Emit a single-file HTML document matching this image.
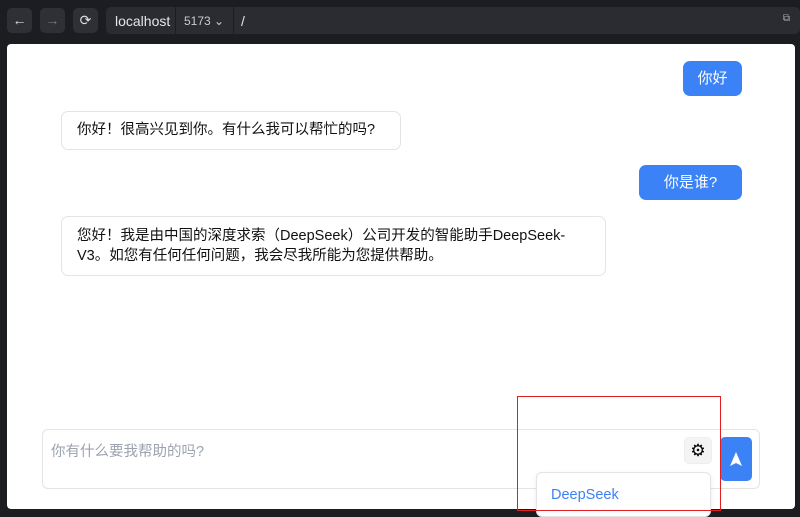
<!DOCTYPE html>
<html><head><meta charset="utf-8"><style>
*{box-sizing:border-box;margin:0;padding:0}
body{width:800px;height:517px;background:#1c1d21;font-family:"Liberation Sans","Noto Sans CJK SC",sans-serif;position:relative;overflow:hidden}
.btn{position:absolute;top:8px;width:25px;height:25px;background:#2e3036;border-radius:5px;color:#ddd;font-size:14px;text-align:center;line-height:25px}
.url{position:absolute;left:106px;top:7px;width:694px;height:27px;background:#2a2c31;border-radius:5px;color:#e6e6e6;font-size:14px}
.page{position:absolute;left:7px;top:44px;width:788px;height:465px;background:#fff;border-radius:4px}
.ub{position:absolute;background:#3b82f6;color:#fff;font-size:15px;border-radius:7px;text-align:center;line-height:35px;height:35px}
.ab{position:absolute;background:#fff;border:1px solid #e4e4e7;border-radius:7px;color:#111;font-size:14.5px;padding:8px 15px;line-height:20px}
</style></head><body>
<div class="btn" style="left:7px">←</div>
<div class="btn" style="left:40px;color:#777">→</div>
<div class="btn" style="left:73px">⟳</div>
<div class="url">
<span style="position:absolute;left:9px;top:6px">localhost</span>
<div style="position:absolute;left:69px;top:0;width:59px;height:27px;border-left:1px solid #1c1d21;border-right:1px solid #1c1d21"></div>
<span style="position:absolute;left:78px;top:7px;font-size:12px;color:#ccc">5173 ⌄</span>
<span style="position:absolute;left:135px;top:6px">/</span>
<span style="position:absolute;right:10px;top:6px;font-size:10px;color:#aaa">⧉</span>
</div>
<div class="page"></div>
<div class="ub" style="left:683px;top:61px;width:59px">你好</div>
<div class="ab" style="left:61px;top:111px;width:340px;height:39px">你好！很高兴见到你。有什么我可以帮忙的吗?</div>
<div class="ub" style="left:639px;top:165px;width:103px">你是谁?</div>
<div class="ab" style="left:61px;top:216px;width:545px;height:60px;padding-top:9px">您好！我是由中国的深度求索（DeepSeek）公司开发的智能助手DeepSeek-V3。如您有任何任何问题，我会尽我所能为您提供帮助。</div>
<div style="position:absolute;left:42px;top:429px;width:718px;height:60px;border:1px solid #e4e4e7;border-radius:6px;background:#fff"></div>
<div style="position:absolute;left:51px;top:440px;font-size:14.5px;color:#9ca3af">你有什么要我帮助的吗?</div>
<div style="position:absolute;left:684px;top:437px;width:28px;height:27px;background:#f4f4f5;border:1px solid #eee;border-radius:5px;text-align:center;line-height:26px;font-size:17px;color:#000">⚙</div>
<div style="position:absolute;left:720px;top:437px;width:32px;height:44px;background:#3b82f6;border-radius:5px">
<svg width="32" height="44" viewBox="0 0 32 44"><path d="M16 15 L22 29 L16 26 L10 29Z" fill="#fff"/></svg></div>
<div style="position:absolute;left:536px;top:472px;width:175px;height:45px;background:#fff;border:1px solid #e4e4e7;border-radius:6px;box-shadow:0 2px 6px rgba(0,0,0,.08)"></div>
<div style="position:absolute;left:551px;top:487px;font-size:14.5px;color:#3b82f6">DeepSeek</div>
<div style="position:absolute;left:517px;top:396px;width:204px;height:115px;border:1px solid #e02020"></div>
</body></html>
